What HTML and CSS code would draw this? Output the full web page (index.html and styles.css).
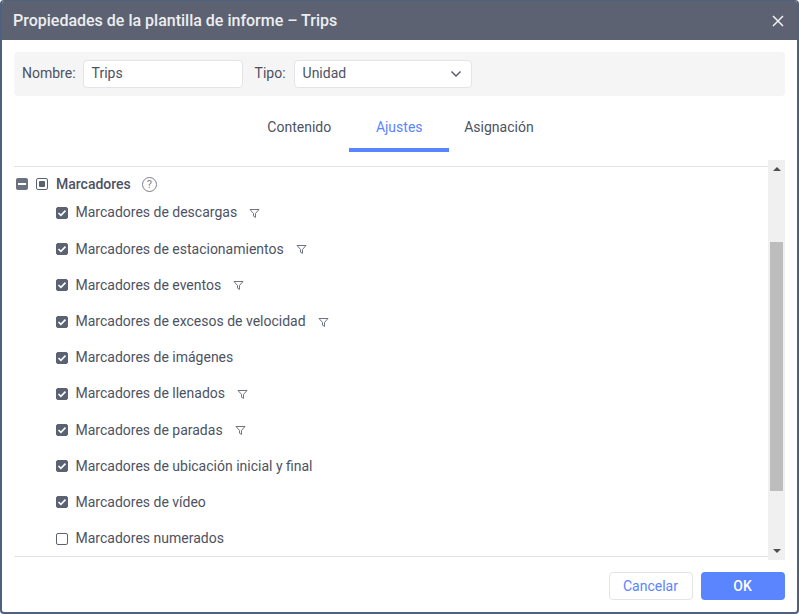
FILE: index.html
```html
<!DOCTYPE html>
<html lang="es">
<head>
<meta charset="utf-8">
<title>Propiedades de la plantilla de informe – Trips</title>
<link rel="stylesheet" href="styles.css">
</head>
<body>
<div class="dialog">
  <header class="head">
    <h1 class="title">Propiedades de la plantilla de informe – Trips</h1>
    <svg class="close" width="12" height="12" viewBox="0 0 12 12"><path d="M1 1l10 10M11 1L1 11" stroke="#f2f3f5" stroke-width="1.5" fill="none"/></svg>
  </header>
  <div class="main">
    <div class="toolbar">
      <label class="lbl">Nombre:</label>
      <div class="field name">Trips</div>
      <label class="lbl tipo">Tipo:</label>
      <div class="field select">Unidad
        <svg class="chev" width="12" height="8" viewBox="0 0 12 8"><path d="M1.5 1.5L6 6l4.5-4.5" stroke="#5a6070" stroke-width="1.5" fill="none"/></svg>
      </div>
    </div>
    <nav class="tabs">
      <div class="tab first">Contenido</div>
      <div class="tab active">Ajustes</div>
      <div class="tab last">Asignación</div>
    </nav>
    <div class="panel">
      <div class="tree">
        <div class="root">
          <span class="expander"></span>
          <span class="tri"></span>
          <span class="rootlabel">Marcadores</span>
          <span class="help">?</span>
        </div>
        <div class="row"><span class="cb on"><svg width="10" height="8" viewBox="0 0 10 8"><path d="M1.5 4l2.4 2.4L8.5 1.6" stroke="#fff" stroke-width="1.6" fill="none"/></svg></span>Marcadores de descargas<svg class="filter" width="11" height="11" viewBox="0 0 11 11"><path d="M1 1.5h9L6.5 5.4v4L4.5 8.2V5.4z" stroke="#6f7480" stroke-width="1" fill="none"/></svg></div>
        <div class="row"><span class="cb on"><svg width="10" height="8" viewBox="0 0 10 8"><path d="M1.5 4l2.4 2.4L8.5 1.6" stroke="#fff" stroke-width="1.6" fill="none"/></svg></span>Marcadores de estacionamientos<svg class="filter" width="11" height="11" viewBox="0 0 11 11"><path d="M1 1.5h9L6.5 5.4v4L4.5 8.2V5.4z" stroke="#6f7480" stroke-width="1" fill="none"/></svg></div>
        <div class="row"><span class="cb on"><svg width="10" height="8" viewBox="0 0 10 8"><path d="M1.5 4l2.4 2.4L8.5 1.6" stroke="#fff" stroke-width="1.6" fill="none"/></svg></span>Marcadores de eventos<svg class="filter" width="11" height="11" viewBox="0 0 11 11"><path d="M1 1.5h9L6.5 5.4v4L4.5 8.2V5.4z" stroke="#6f7480" stroke-width="1" fill="none"/></svg></div>
        <div class="row"><span class="cb on"><svg width="10" height="8" viewBox="0 0 10 8"><path d="M1.5 4l2.4 2.4L8.5 1.6" stroke="#fff" stroke-width="1.6" fill="none"/></svg></span>Marcadores de excesos de velocidad<svg class="filter" width="11" height="11" viewBox="0 0 11 11"><path d="M1 1.5h9L6.5 5.4v4L4.5 8.2V5.4z" stroke="#6f7480" stroke-width="1" fill="none"/></svg></div>
        <div class="row"><span class="cb on"><svg width="10" height="8" viewBox="0 0 10 8"><path d="M1.5 4l2.4 2.4L8.5 1.6" stroke="#fff" stroke-width="1.6" fill="none"/></svg></span>Marcadores de imágenes</div>
        <div class="row"><span class="cb on"><svg width="10" height="8" viewBox="0 0 10 8"><path d="M1.5 4l2.4 2.4L8.5 1.6" stroke="#fff" stroke-width="1.6" fill="none"/></svg></span>Marcadores de llenados<svg class="filter" width="11" height="11" viewBox="0 0 11 11"><path d="M1 1.5h9L6.5 5.4v4L4.5 8.2V5.4z" stroke="#6f7480" stroke-width="1" fill="none"/></svg></div>
        <div class="row"><span class="cb on"><svg width="10" height="8" viewBox="0 0 10 8"><path d="M1.5 4l2.4 2.4L8.5 1.6" stroke="#fff" stroke-width="1.6" fill="none"/></svg></span>Marcadores de paradas<svg class="filter" width="11" height="11" viewBox="0 0 11 11"><path d="M1 1.5h9L6.5 5.4v4L4.5 8.2V5.4z" stroke="#6f7480" stroke-width="1" fill="none"/></svg></div>
        <div class="row"><span class="cb on"><svg width="10" height="8" viewBox="0 0 10 8"><path d="M1.5 4l2.4 2.4L8.5 1.6" stroke="#fff" stroke-width="1.6" fill="none"/></svg></span>Marcadores de ubicación inicial y final</div>
        <div class="row"><span class="cb on"><svg width="10" height="8" viewBox="0 0 10 8"><path d="M1.5 4l2.4 2.4L8.5 1.6" stroke="#fff" stroke-width="1.6" fill="none"/></svg></span>Marcadores de vídeo</div>
        <div class="row"><span class="cb"></span>Marcadores numerados</div>
      </div>
      <div class="scrollbar">
        <span class="arrow up"></span>
        <div class="track"><div class="thumb"></div></div>
        <span class="arrow down"></span>
      </div>
    </div>
    <footer class="foot">
      <button class="btn cancel">Cancelar</button>
      <button class="btn ok">OK</button>
    </footer>
  </div>
</div>
</body>
</html>
```

FILE: styles.css
```css
* { box-sizing: border-box; }
html, body { margin: 0; height: 100%; }
body { font-family: Roboto, "Liberation Sans", sans-serif; font-size: 14px; color: #4d5262; background: #fff; }
.dialog {
  width: 799px; height: 614px; display: flex; flex-direction: column;
  border: 2px solid #4f6080; border-top-width: 1px; border-radius: 4px; overflow: hidden; background: #fff;
}
.head {
  height: 39px; flex: none; background: #5c6271; display: flex; align-items: center;
  justify-content: space-between; padding: 0 13px 0 11px;
}
.title { margin: 0; font-size: 16px; font-weight: 500; color: #eceef1; }
.close { display: block; margin-top: 1px; }
.main { flex: 1; display: flex; flex-direction: column; padding: 12px 12px 0; min-height: 0; }
.toolbar {
  height: 44px; flex: none; background: #f5f5f5; border-radius: 4px; display: flex; align-items: center; padding: 0 8px;
}
.lbl { margin-right: 7px; padding-bottom: 2px; }
.lbl.tipo { margin-left: 12px; margin-right: 8px; }
.field {
  height: 28px; background: #fff; border: 1px solid #e4e4e6; border-radius: 4px; padding: 0 8px 2px;
  display: flex; align-items: center;
}
.name { width: 160px; }
.select { width: 178px; justify-content: space-between; padding-right: 9px; }
.chev { display: block; margin-top: 1px; }
.tabs { height: 56px; flex: none; display: flex; justify-content: center; }
.tab { height: 56px; padding: 10px 16px 0; display: flex; align-items: center; border-bottom: 4px solid transparent; }
.tab.first { padding: 10px 18px 0; }
.tab.last { padding: 10px 16px 0 15px; }
.tab.active { width: 100px; justify-content: center; color: #5b84ff; border-bottom-color: #5b84ff; padding: 10px 0 0; }
.panel { height: 400px; flex: none; margin-top: 8px; display: flex; }
.tree {
  flex: 1; margin-top: 6px; height: 391px; border-top: 1px solid #e4e4e4; border-bottom: 1px solid #e4e4e4;
  padding: 7px 4px 0 2px; overflow: hidden;
}
.root { height: 20.4px; display: flex; align-items: center; }
.expander { width: 12px; height: 12px; background: #6c7180; border-radius: 2px; margin-right: 8px; }
.expander::after { content: ""; display: block; width: 8px; height: 2px; background: #fff; margin: 5px 2px; }
.tri { width: 12px; height: 12px; border: 1px solid #5c6271; border-radius: 2px; margin-right: 8px; padding: 2px; }
.tri::after { content: ""; display: block; width: 6px; height: 6px; background: #5c6271; border-radius: 1px; }
.rootlabel { font-weight: 500; color: #4d5262; }
.help {
  width: 15px; height: 15px; border: 1px solid #7c808c; border-radius: 50%; margin-left: 11px;
  font-size: 11px; line-height: 13px; text-align: center; color: #7c808c;
}
.row { height: 36.2px; display: flex; align-items: center; padding-left: 40px; }
.cb {
  width: 12px; height: 12px; border: 1px solid #5c6271; border-radius: 2px; margin: 1px 7.5px 0 0; flex: none;
  display: flex; align-items: center; justify-content: center; background: #fff;
}
.cb.on { background: #5c6271; }
.cb svg { display: block; }
.filter { margin-left: 12px; margin-top: 2px; display: block; }
.scrollbar { width: 17px; height: 400px; background: #f0f0f0; display: flex; flex-direction: column; align-items: center; flex: none; }
.arrow { width: 0; height: 0; border-left: 4px solid transparent; border-right: 4px solid transparent; flex: none; }
.arrow.up { border-bottom: 4px solid #505050; margin: 7px 0 5px; }
.arrow.down { border-top: 4px solid #505050; margin: 5px 0 7px; }
.track { flex: 1; width: 13px; padding-top: 66px; }
.thumb { height: 249px; background: #bdbdbd; }
.foot { flex: 1; display: flex; justify-content: flex-end; align-items: flex-start; gap: 8px; padding-top: 12px; }
.btn { height: 28px; border-radius: 4px; font: 500 14px Roboto, "Liberation Sans", sans-serif; width: 84px; padding: 0 1px 0 0; cursor: pointer; }
.cancel { background: #fff; border: 1px solid #e4e4e4; color: #5b84ff; font-weight: 400; }
.ok { background: #5b84ff; border: none; color: #fff; }
```
